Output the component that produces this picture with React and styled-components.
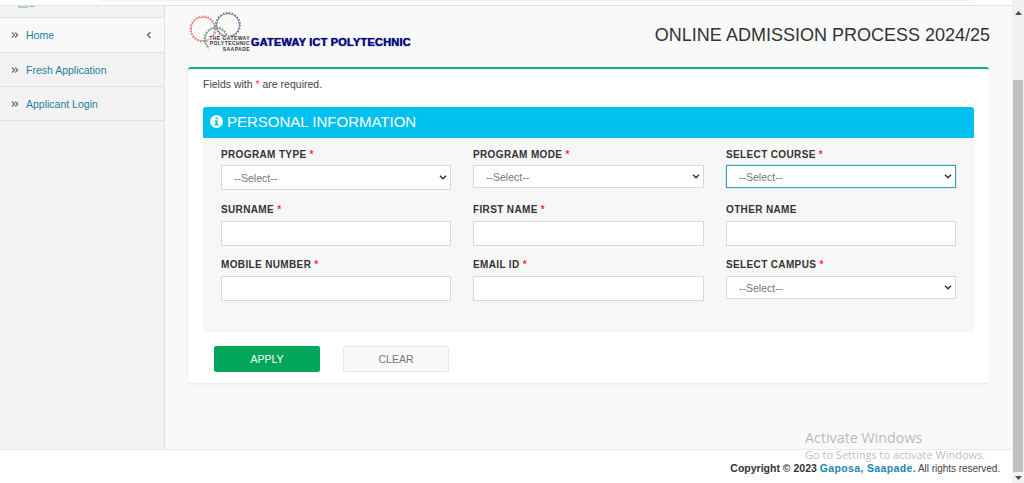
import styled, { createGlobalStyle } from "styled-components";

const GlobalStyle = createGlobalStyle`
  html, body {
    margin: 0;
    height: 100%;
    overflow: hidden;
    background: #fff;
    font-family: "Liberation Sans", Arial, sans-serif;
  }
`;

const selectArrow =
  "url(\"data:image/svg+xml,%3Csvg xmlns='http://www.w3.org/2000/svg' width='8' height='5'%3E%3Cpath d='M1 .8l3 3 3-3' fill='none' stroke='%23333' stroke-width='1.5'/%3E%3C/svg%3E\")";

const Page = styled.div`
  width: 1024px;
  height: 483px;
  display: flex;
  position: relative;
  overflow: hidden;
`;

const Main = styled.div`
  width: 1012px;
  display: flex;
  flex-direction: column;
`;

const TopStrip = styled.div`
  height: 5px;
  background: #fff;
  border-bottom: 1px solid #e6e3e6;
  padding: 0 38px 0 100px;
  flex: none;
`;

const TopBand = styled.div`
  height: 1px;
  background: #f0f2fc;
`;

const Body = styled.div`
  height: 443px;
  display: flex;
  flex: none;
  background: #f9f9f9;
`;

const Sidebar = styled.nav`
  width: 164px;
  background: #f3f3f3;
  border-right: 1px solid #e2e2e2;
  flex: none;
`;

const BrandStub = styled.div`
  height: 11px;
  border-bottom: 1px solid #dfdfdf;
  display: flex;
  padding-left: 18px;
`;

const MenuItem = styled.a`
  height: ${(p) => (p.$active ? "34px" : "33px")};
  display: flex;
  align-items: center;
  padding: 0 12px 0 11px;
  background: ${(p) => (p.$active ? "#f9f9f9" : "#f3f3f3")};
  border-bottom: 1px solid #e2e2e2;
  color: #1d7f9e;
  font-size: 10.5px;
`;

const MenuArrow = styled.span`
  width: 15px;
  display: flex;
`;

const MenuLabel = styled.span`
  flex: 1;
`;

const Content = styled.main`
  flex: 1;
  padding: 0 23px;
  min-width: 0;
`;

const PageHead = styled.header`
  height: 61px;
  display: flex;
  justify-content: space-between;
  align-items: flex-start;
`;

const Logo = styled.div`
  display: flex;
  height: 42px;
  margin-top: 6px;
`;

const GearWrap = styled.div`
  position: relative;
  width: 63px;
  height: 42px;
`;

const GearCaption = styled.div`
  position: absolute;
  right: 1px;
  top: 24px;
  text-align: right;
  font-size: 5px;
  line-height: 5.4px;
  font-weight: bold;
  letter-spacing: 0.45px;
  color: #333;
  background: #f9f9f9;
  white-space: nowrap;
`;

const LogoName = styled.div`
  font-size: 11px;
  font-weight: bold;
  color: #0b0b80;
  letter-spacing: 0.2px;
  line-height: 12px;
  margin-top: 24px;
  text-shadow: 0 0 1px #0b0b80;
  white-space: nowrap;
`;

const Heading = styled.h1`
  margin: 19px -1px 0 0;
  font-size: 18px;
  line-height: 21px;
  font-weight: normal;
  color: #333;
`;

const Card = styled.section`
  height: 316px;
  box-sizing: border-box;
  background: #fff;
  border-top: 2px solid #0eb56a;
  border-radius: 3px;
  box-shadow: 0 1px 2px rgba(0, 0, 0, 0.08);
  padding: 9px 15px 0;
`;

const Note = styled.p`
  margin: 0 0 16px;
  font-size: 10.5px;
  line-height: 13px;
  color: #444;
`;

const Req = styled.span`
  color: #f33;
`;

const Panel = styled.div`
  height: 225px;
  background: #f7f7f7;
  border-radius: 3px;
`;

const PanelHead = styled.div`
  height: 31px;
  box-sizing: border-box;
  padding: 0 0 2px 7px;
  background: #00c0ef;
  border-radius: 3px 3px 0 0;
  display: flex;
  align-items: center;
  gap: 4px;
  color: #fff;
  font-size: 15px;
`;

const FormGrid = styled.div`
  display: grid;
  grid-template-columns: 230px 231px 230px;
  column-gap: 22px;
  row-gap: 7px;
  padding: 11px 18px 0;
`;

const Field = styled.div`
  height: 48px;
`;

const Label = styled.label`
  display: block;
  height: 17px;
  font-size: 10px;
  line-height: 12px;
  font-weight: bold;
  letter-spacing: 0.36px;
  color: #333;
`;

const TextBox = styled.input`
  display: block;
  box-sizing: border-box;
  width: 100%;
  height: 25px;
  background: #fff;
  border: 1px solid #d8d8d8;
  border-radius: 0;
  outline: none;
`;

const Select = styled.select`
  display: block;
  box-sizing: border-box;
  width: 100%;
  height: ${(p) => (p.$tall ? "25px" : "23px")};
  margin-top: ${(p) => (p.$raised ? "-1px" : "0")};
  padding: 0 12px;
  appearance: none;
  background: #fff ${selectArrow} no-repeat right 3px center;
  border: 1px solid ${(p) => (p.$focused ? "#3c9dc4" : "#d8d8d8")};
  box-shadow: ${(p) => (p.$focused ? "0 0 1px #3c9dc4" : "none")};
  border-radius: 0;
  outline: none;
  color: #777;
  font-family: "Liberation Sans", Arial, sans-serif;
  font-size: 10.5px;
`;

const Actions = styled.div`
  display: flex;
  gap: 23px;
  padding: 14px 0 0 11px;
`;

const Button = styled.button`
  width: 106px;
  height: 26px;
  box-sizing: border-box;
  border: 1px solid ${(p) => (p.$primary ? "#00a65a" : "#e6e6e6")};
  border-radius: 2px;
  background: ${(p) => (p.$primary ? "#00a65a" : "#f9f9f9")};
  color: ${(p) => (p.$primary ? "#fff" : "#777")};
  font-family: "Liberation Sans", Arial, sans-serif;
  font-size: 10.5px;
  padding: 0;
`;

const Footer = styled.footer`
  flex: 1;
  background: #fff;
  border-top: 1px solid #e8e8e8;
  display: flex;
  justify-content: flex-end;
  align-items: flex-start;
  padding: 12px 12px 0 0;
  font-size: 10px;
  letter-spacing: -0.04px;
  line-height: 13px;
  color: #444;
`;

const Strong = styled.b`
  color: #333;
  font-size: 10.5px;
  letter-spacing: 0;
  white-space: pre;
`;

const FooterLink = styled.b`
  color: #1b86b5;
  font-size: 10.5px;
  letter-spacing: 0.36px;
  margin-right: 2px;
`;

const Scrollbar = styled.div`
  width: 12px;
  padding-top: 5px;
  background: #f1f1f1;
  display: flex;
  flex-direction: column;
  align-items: center;
  flex: none;
`;

const ScrollButton = styled.div`
  height: ${(p) => (p.$end ? "11px" : "16px")};
  display: flex;
  align-items: center;
  justify-content: center;
  flex: none;
`;

const ScrollThumb = styled.div`
  width: 10px;
  height: 392px;
  margin-top: 59px;
  background: #c1c1c1;
  flex: none;
`;

const Watermark = styled.div`
  position: absolute;
  left: 805px;
  top: 429px;
  color: rgba(120, 120, 120, 0.5);
  font-family: "Open Sans", sans-serif;
  pointer-events: none;
`;

const WatermarkTitle = styled.div`
  font-size: 14.3px;
  line-height: 17px;
`;

const WatermarkText = styled.div`
  font-size: 11px;
  line-height: 16px;
  margin-top: 1px;
`;

const DoubleChevron = () => (
  <svg width="8" height="8" viewBox="0 0 8 8" fill="none" stroke="#666" strokeWidth="1.1">
    <path d="M1 1.5 3.5 4 1 6.5M4.2 1.5 6.7 4 4.2 6.5" />
  </svg>
);

const ChevronLeft = () => (
  <svg width="6" height="8" viewBox="0 0 6 8" fill="none" stroke="#555" strokeWidth="1.1">
    <path d="M4.5 1 1.5 4l3 3" />
  </svg>
);

const InfoIcon = () => (
  <svg width="13" height="13" viewBox="0 0 14 14">
    <circle cx="7" cy="7" r="7" fill="#fff" />
    <rect x="5.9" y="2.6" width="2.3" height="2" rx="0.4" fill="#00c0ef" />
    <path d="M5 5.7h3.2v4.1h.9v1.4H5V9.8h.9V7.1H5z" fill="#00c0ef" />
  </svg>
);

const BrandFragment = () => (
  <svg width="18" height="3" viewBox="0 0 18 3">
    <rect width="10" height="2" fill="#a9d3bf" />
    <rect x="11" width="6" height="1" fill="#b0b0b0" />
  </svg>
);

const GearRing = ({ cx, cy, r, color }) => (
  <g stroke={color} fill="none">
    <circle cx={cx} cy={cy} r={r - 0.6} strokeWidth="0.9" />
    <circle cx={cx} cy={cy} r={r} strokeWidth="2" strokeDasharray="1.5 1.5" />
  </g>
);

const Gears = () => (
  <svg width="63" height="42" viewBox="0 0 63 42">
    <GearRing cx={15} cy={17} r={12.5} color="#e8858c" />
    <GearRing cx={40} cy={13} r={12} color="#7d7d98" />
    <GearRing cx={28} cy={27} r={11.5} color="#6fa98d" />
  </svg>
);

const fields = [
  { label: "PROGRAM TYPE", required: true, select: true, raised: true, tall: true },
  { label: "PROGRAM MODE", required: true, select: true, raised: true },
  { label: "SELECT COURSE", required: true, select: true, raised: true, focused: true },
  { label: "SURNAME", required: true },
  { label: "FIRST NAME", required: true },
  { label: "OTHER NAME" },
  { label: "MOBILE NUMBER", required: true },
  { label: "EMAIL ID", required: true },
  { label: "SELECT CAMPUS", required: true, select: true },
];

export default function App() {
  return (
    <Page>
      <GlobalStyle />
      <Main>
        <TopStrip><TopBand /></TopStrip>
        <Body>
          <Sidebar>
            <BrandStub><BrandFragment /></BrandStub>
            <MenuItem $active>
              <MenuArrow><DoubleChevron /></MenuArrow>
              <MenuLabel>Home</MenuLabel>
              <ChevronLeft />
            </MenuItem>
            <MenuItem>
              <MenuArrow><DoubleChevron /></MenuArrow>
              <MenuLabel>Fresh Application</MenuLabel>
            </MenuItem>
            <MenuItem>
              <MenuArrow><DoubleChevron /></MenuArrow>
              <MenuLabel>Applicant Login</MenuLabel>
            </MenuItem>
          </Sidebar>
          <Content>
            <PageHead>
              <Logo>
                <GearWrap>
                  <Gears />
                  <GearCaption>THE GATEWAY<br />POLYTECHNIC<br />SAAPADE</GearCaption>
                </GearWrap>
                <LogoName>GATEWAY ICT POLYTECHNIC</LogoName>
              </Logo>
              <Heading>ONLINE ADMISSION PROCESS 2024/25</Heading>
            </PageHead>
            <Card>
              <Note>Fields with <Req>*</Req> are required.</Note>
              <Panel>
                <PanelHead><InfoIcon />PERSONAL INFORMATION</PanelHead>
                <FormGrid>
                  {fields.map((f) => (
                    <Field key={f.label}>
                      <Label>{f.label}{f.required && <Req> *</Req>}</Label>
                      {f.select ? (
                        <Select $focused={f.focused} $raised={f.raised} $tall={f.tall}>
                          <option>--Select--</option>
                        </Select>
                      ) : (
                        <TextBox />
                      )}
                    </Field>
                  ))}
                </FormGrid>
              </Panel>
              <Actions>
                <Button $primary>APPLY</Button>
                <Button>CLEAR</Button>
              </Actions>
            </Card>
          </Content>
        </Body>
        <Footer>
          <span>
            <Strong>Copyright © 2023 </Strong>
            <FooterLink>Gaposa, Saapade.</FooterLink>
            All rights reserved.
          </span>
        </Footer>
      </Main>
      <Scrollbar>
        <ScrollButton>
          <svg width="7" height="4" viewBox="0 0 7 4"><path d="M3.5 0 7 4H0z" fill="#505050" /></svg>
        </ScrollButton>
        <ScrollThumb />
        <ScrollButton $end>
          <svg width="7" height="4" viewBox="0 0 7 4"><path d="M0 0h7L3.5 4z" fill="#505050" /></svg>
        </ScrollButton>
      </Scrollbar>
      <Watermark>
        <WatermarkTitle>Activate Windows</WatermarkTitle>
        <WatermarkText>Go to Settings to activate Windows.</WatermarkText>
      </Watermark>
    </Page>
  );
}
